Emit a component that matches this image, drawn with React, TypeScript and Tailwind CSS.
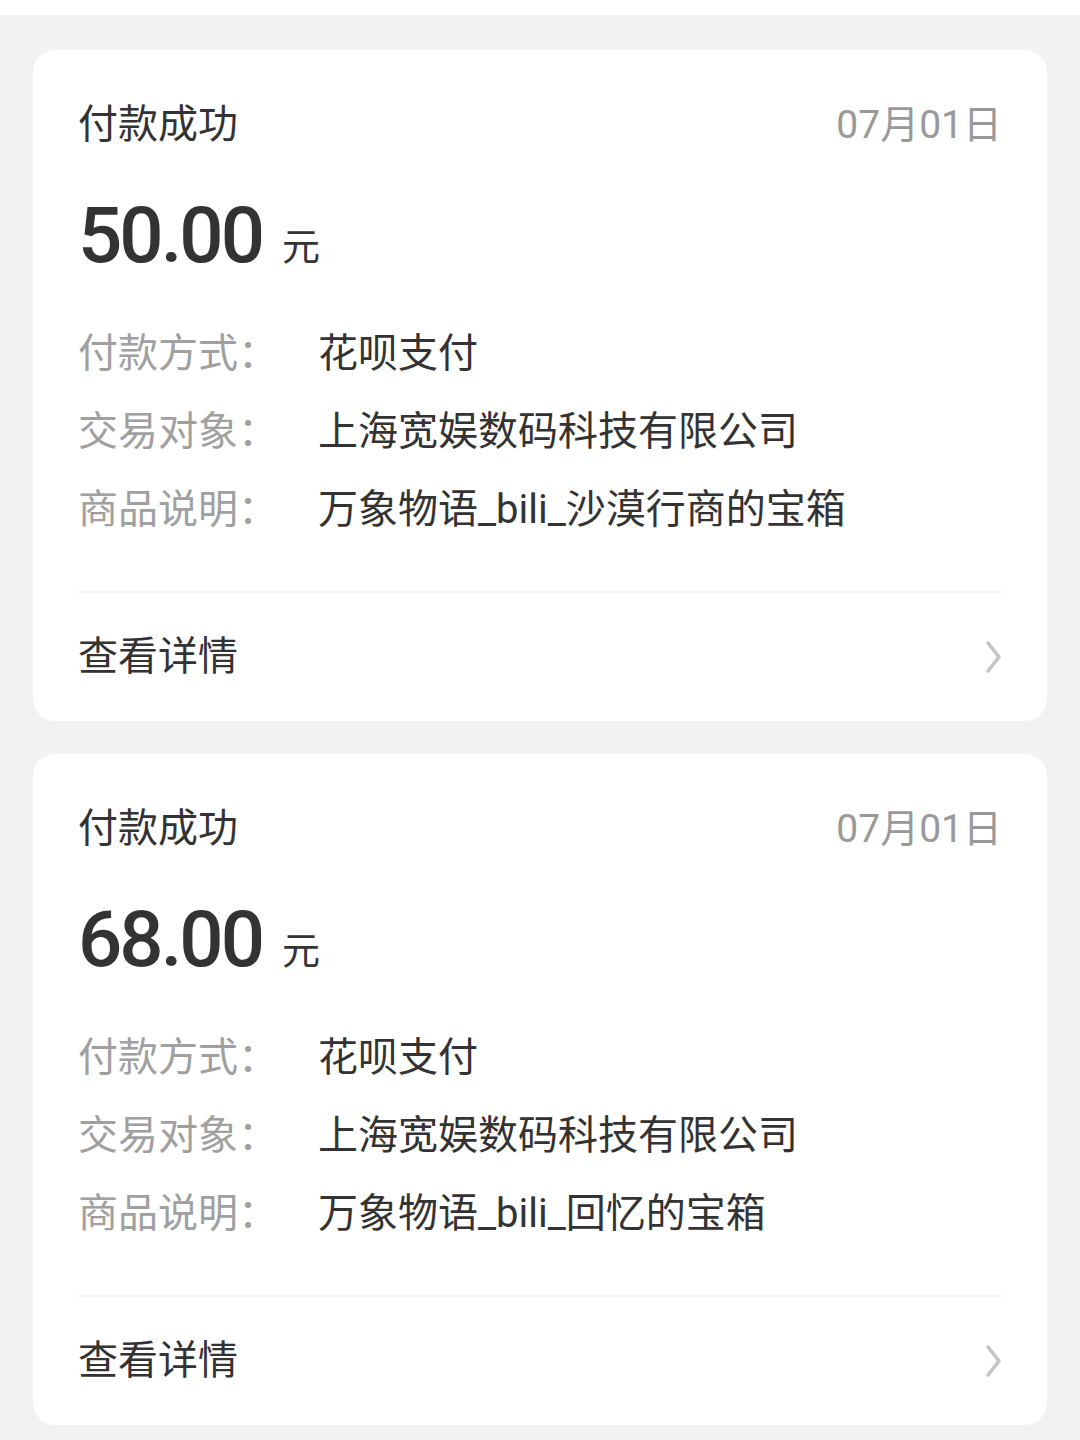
import React from "react";

const orders = [
  {
    amount: "50.00",
    date: "07月01日",
    rows: [
      { label: "付款方式：", value: "花呗支付" },
      { label: "交易对象：", value: "上海宽娱数码科技有限公司" },
      { label: "商品说明：", value: "万象物语_bili_沙漠行商的宝箱" },
    ],
  },
  {
    amount: "68.00",
    date: "07月01日",
    rows: [
      { label: "付款方式：", value: "花呗支付" },
      { label: "交易对象：", value: "上海宽娱数码科技有限公司" },
      { label: "商品说明：", value: "万象物语_bili_回忆的宝箱" },
    ],
  },
] as const;

const font = { fontFamily: '"Roboto", "Noto Sans CJK SC", sans-serif' };

const App: React.FC = () => {
  return (
    <div className="min-h-[1440px] w-[1080px] bg-[#f2f2f2]" style={font}>
      <div className="h-[15px] bg-white" />
      <div className="flex flex-col gap-[33px] px-[33px] pt-[35px]">
        {orders.map((order, i) => (
          <div key={i} className="rounded-[22px] bg-white px-[45px] pt-[47px]">
            <div className="flex h-[56px] items-center justify-between">
              <span className="text-[40px] text-[#333]">付款成功</span>
              <span className="text-[39px] text-[#999]">{order.date}</span>
            </div>
            <div className="mt-[41px] flex h-[84px] items-end">
              <span className="text-[78px] font-medium leading-[84px] tracking-[-3px] text-[#333]">
                {order.amount}
              </span>
              <span className="mb-[6px] ml-[20px] text-[38px] leading-[50px] text-[#333]">元</span>
            </div>
            <div className="mt-[37px] flex flex-col">
              {order.rows.map((row) => (
                <div key={row.label} className="flex h-[78px] items-center text-[40px]">
                  <span className="w-[240px] text-[#a0a0a0]">{row.label}</span>
                  <span className="text-[#333]">{row.value}</span>
                </div>
              ))}
            </div>
            <div className="mt-[42px] h-[2px] bg-[#f4f4f4]" />
            <div className="flex h-[128px] items-center justify-between">
              <span className="text-[40px] text-[#333]">查看详情</span>
              <svg width="20" height="36" viewBox="0 0 20 36" className="mr-[-2px]">
                <path d="M4 4 L15 18 L4 32" fill="none" stroke="#c4c4c4" strokeWidth="3.5" strokeLinecap="round" strokeLinejoin="round" />
              </svg>
            </div>
          </div>
        ))}
      </div>
    </div>
  );
};

export default App;
